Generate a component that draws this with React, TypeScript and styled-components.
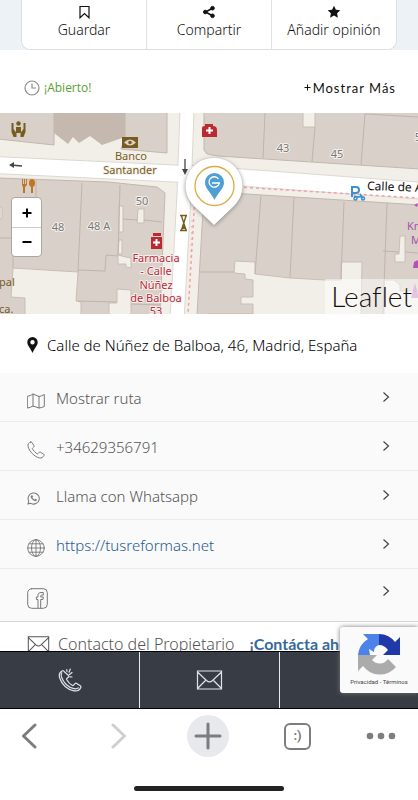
import React from "react";
import styled, { createGlobalStyle, css } from "styled-components";

const sans = '"Noto Sans", "Open Sans", sans-serif';
const rounded = 'Lato, "Open Sans", sans-serif';

const GlobalStyle = createGlobalStyle`
  *, *::before, *::after { box-sizing: border-box; }
  body { margin: 0; background: #fff; font-family: ${sans}; font-weight: 300; color: #111; }
  button { font: inherit; color: inherit; border: 0; padding: 0; background: none; cursor: pointer; }
  a { color: inherit; text-decoration: none; }
  svg { display: block; flex: none; }
`;

const Screen = styled.div`
  position: relative;
  display: flex;
  flex-direction: column;
  height: 100vh;
  overflow: hidden;
`;

const Content = styled.main`
  flex: 1;
  min-height: 0;
  overflow: hidden;
`;

const ActionsBand = styled.div`
  height: 50px;
  padding: 0 21px;
  background: #edf2f6;
`;

const ActionsCard = styled.div`
  display: flex;
  height: 100%;
  background: #fff;
  border: 1px solid #dbdfe3;
  border-top: 0;
  border-radius: 0 0 9px 9px;
`;

const Action = styled.button`
  flex: 1;
  display: flex;
  flex-direction: column;
  align-items: center;
  gap: 2px;
  padding-top: 5px;
  font-size: 14px;
  line-height: 18px;
  white-space: nowrap;
  & + & { border-left: 1px solid #dfe2e6; }
`;

const StatusRow = styled.section`
  display: flex;
  align-items: center;
  justify-content: space-between;
  height: 63px;
  padding: 12px 22px 0 24px;
`;

const OpenState = styled.div`
  display: flex;
  align-items: center;
  gap: 4px;
  color: #5a9e32;
  font-family: "Open Sans", sans-serif;
  font-size: 12px;
  font-weight: 400;
  line-height: 18px;
`;

const MoreButton = styled.button`
  display: flex;
  align-items: center;
  gap: 2px;
  font-family: ${rounded};
  font-size: 13px;
  font-weight: 400;
  line-height: 18px;
  letter-spacing: 1px;
`;

const MapFrame = styled.section`
  position: relative;
  height: 201px;
  overflow: hidden;
  background: #f2efe9;
`;

const MapDrawing = styled.svg`
  width: 100%;
  height: 100%;
  font-family: "Noto Sans", sans-serif;
  font-weight: 400;
`;

const ZoomControl = styled.div`
  position: absolute;
  left: 11px;
  top: 84px;
  width: 31px;
  border: 1px solid #aaa6a2;
  border-radius: 4px;
  background: #fff;
  overflow: hidden;
`;

const ZoomButton = styled.button`
  display: grid;
  place-items: center;
  width: 100%;
  height: 29px;
  color: #000;
  & + & { border-top: 1px solid #ccc; }
`;

const Attribution = styled.a`
  position: absolute;
  right: 0;
  bottom: 0;
  height: 35px;
  padding: 0 6px;
  background: rgba(255, 255, 255, 0.5);
  color: #111;
  font-family: ${rounded};
  font-size: 28px;
  font-weight: 300;
  font-variant-ligatures: none;
  line-height: 35px;
`;

const Address = styled.address`
  display: flex;
  align-items: center;
  gap: 9px;
  height: 59px;
  padding: 2px 27px 0;
  font-style: normal;
  font-size: 15px;
  line-height: 20px;
  white-space: nowrap;
  color: #000;
`;

const Links = styled.nav`
  background: #fafafa;
  border-bottom: 1px solid #d5d5d5;
`;

const LinkRow = styled.a<{ $blue?: boolean; $tall?: boolean }>`
  display: flex;
  align-items: center;
  height: 49px;
  padding: 2px 28px 0 27px;
  font-size: 15px;
  line-height: 20px;
  color: ${(p) => (p.$blue ? "#1f5a90" : "#555")};
  border-bottom: 1px solid #ececec;
  ${(p) => p.$tall && css`height: 52px; border-bottom: 0;`}
`;

const LinkIcon = styled.span`
  width: 29px;
  padding-top: 5px;
  color: #777;
`;

const LinkText = styled.span`
  flex: 1;
`;

const RowArrow = styled.span<{ $raised?: boolean }>`
  color: #444;
  padding-bottom: ${(p) => (p.$raised ? "10px" : "2px")};
`;

const ContactRow = styled.section`
  display: flex;
  align-items: center;
  gap: 8px;
  padding: 11px 27px;
  font-size: 16px;
  line-height: 22px;
  white-space: nowrap;
  color: #555;
`;

const ContactLink = styled.a`
  margin-left: 7px;
  color: #36699a;
  font-family: ${rounded};
  font-weight: 700;
`;

const QuickBar = styled.nav`
  display: grid;
  grid-template-columns: 1fr 1fr 1fr;
  flex: none;
  height: 58px;
  background: #383d45;
  border: solid #000;
  border-width: 1px 0;
`;

const QuickButton = styled.button`
  display: grid;
  place-items: center;
  color: #dfe4e9;
  & + & { border-left: 1px solid #e6ebef; }
`;

const BrowserBar = styled.footer`
  display: flex;
  flex-direction: column;
  align-items: center;
  justify-content: space-between;
  flex: none;
  height: 91px;
  padding: 6px 0 9px;
  background: #fff;
`;

const BrowserButtons = styled.div`
  display: flex;
  align-items: center;
  justify-content: space-between;
  width: 100%;
  padding: 0 22px 0 8px;
`;

const BrowserButton = styled.button<{ $faint?: boolean; $round?: boolean; $narrow?: boolean }>`
  display: grid;
  place-items: center;
  width: ${(p) => (p.$narrow ? "30px" : "42px")};
  height: 42px;
  border-radius: ${(p) => (p.$round ? "50%" : "0")};
  color: ${(p) => (p.$faint ? "#cfcfd0" : "#7b7d80")};
  background: ${(p) => (p.$round ? "#e7e9ec" : "transparent")};
`;

const TabCount = styled.span`
  display: grid;
  place-items: center;
  width: 27px;
  height: 27px;
  border: 2px solid #7b7d80;
  border-radius: 6px;
  font-family: Roboto, sans-serif;
  font-size: 13px;
  font-weight: 700;
  line-height: 16px;
`;

const HomeIndicator = styled.div`
  width: 36%;
  height: 5px;
  border-radius: 3px;
  background: #222;
`;

const PrivacyBadge = styled.aside`
  position: absolute;
  right: 0;
  bottom: 107px;
  display: flex;
  flex-direction: column;
  align-items: center;
  width: 78px;
  height: 66px;
  padding-top: 6px;
  border-radius: 3px 0 0 3px;
  background: #fafafa;
  box-shadow: 0 0 5px #777;
  font-family: Roboto, sans-serif;
  font-size: 6px;
  font-weight: 400;
  line-height: 9px;
  color: #444;
`;

const Chevron = () => (
  <svg width="8" height="12" viewBox="0 0 8 12" fill="none" stroke="currentColor" strokeWidth="1.2">
    <path d="M1.500 1.500 6.500 6l-5 4.500" />
  </svg>
);

const Envelope = ({ width, height }: { width: number; height: number }) => (
  <svg width={width} height={height} viewBox="0 0 26 20" fill="none" stroke="currentColor" strokeWidth="1.2">
    <path d="M1 1h24v18H1zM1 2l9 8.500c2 1.800 4 1.800 6 0L25 2M1 18.500l8-8M25 18.500l-8-8" />
  </svg>
);

const thin = { fill: "none", stroke: "currentColor", strokeWidth: 1, strokeLinejoin: "round" as const, strokeLinecap: "round" as const };

const FoldedMap = () => (
  <svg width="18" height="16" viewBox="0 0 18 16" {...thin}>
    <path d="M.7 3.200C2.500 3 4.200 2.200 6 1l6 2.500c1.800-.2 3.500-1 5.300-2v12c-1.800.8-3.500 1.300-5.300 1.500l-6-2c-1.800 1-3.500 1.600-5.300 2zM6 1v12M12 3.500V15" />
  </svg>
);
const Phone = () => (
  <svg width="18" height="18" viewBox="0 0 18 18" {...thin}>
    <path d="M3.600 1C1.500 1.800.5 3.500 1 5.400c1 4.600 6.600 10.600 11.400 11.500 2 .4 3.900-.7 4.600-2.600.2-.6 0-1-.5-1.300l-3-1.800c-.5-.3-1-.2-1.400.2l-1 1.200c-.3.400-.8.400-1.200.1-1.800-1.200-3.200-2.800-4.400-4.600-.3-.5-.2-.9.2-1.200l1-.9c.5-.4.500-.9.2-1.400L5 1.500C4.600 1 4.200.8 3.600 1z" />
  </svg>
);
const Whatsapp = () => (
  <svg width="13" height="13" viewBox="0 0 14 14" {...thin} strokeWidth="1.100">
    <path d="M1 13l.9-3.200A6 6 0 1 1 4.200 12.200z" />
    <path d="M4.800 3.700c-1 .8-.8 2 .2 3.400 1.200 1.700 2.700 2.600 4 2.600 1 0 1.600-.6 1.500-1.500L8.900 7.500l-.8.900C7 8 6.100 7.100 5.700 6l.7-.8-.6-1.500z" fill="currentColor" strokeWidth=".3" />
  </svg>
);
const Globe = () => (
  <svg width="18" height="18" viewBox="0 0 18 18" {...thin} strokeWidth=".9">
    <circle cx="9" cy="9" r="8.300" />
    <ellipse cx="9" cy="9" rx="4.500" ry="8.300" />
    <path d="M9 .7v16.600M.7 9h16.600M2 4.800h14M2 13.200h14" />
  </svg>
);
const Facebook = () => (
  <svg width="21" height="21" viewBox="0 0 21 21" {...thin}>
    <rect x=".7" y=".7" width="19.600" height="19.600" rx="4" />
    <path d="M11 20v-8.500H9.400V9H11V7.500c0-2 1.200-3 3-3h2.300v2.600h-1.600c-.7 0-1 .3-1 1V9h2.600l-.4 2.500h-2.200V20" />
  </svg>
);
const RingingPhone = () => (
  <svg width="24" height="24" viewBox="0 0 24 24" {...thin} strokeWidth="1.200">
    <path d="M4 3C1.400 4.500.7 7 1.700 10c2 6.500 7.800 12 14.300 12.800 3 .4 5.700-.9 6.800-3.400.3-.7.100-1.200-.5-1.600l-3.600-2.300c-.6-.4-1.200-.3-1.700.2l-1.400 1.500c-.4.500-1 .5-1.500.1-2.200-1.300-4-3.300-5.300-5.600-.3-.6-.2-1.100.3-1.500l1.200-1c.6-.5.600-1.100.3-1.700L6.300 3.800C5.800 2.700 5 2.400 4 3zM3.800 5c-.8 1-.8 2.200-.3 4 1.700 5.500 6.700 10.500 12.500 11.700 1.600.3 3.200.1 4.300-.8M9 3.500l-.3-2M11 4.300l1.300-3.300M11.500 6.500l2.500-2M12 8.800l2 .2" />
  </svg>
);

const actions = [
  {
    label: "Guardar",
    icon: <svg width="15" height="14" viewBox="0 0 15 14" fill="none" stroke="currentColor" strokeWidth="1.200"><path d="M3 1.500h9v11.300L7.500 8.600 3 12.800z" /></svg>,
  },
  {
    label: "Compartir",
    icon: <svg width="14" height="14" viewBox="0 0 14 14" fill="currentColor" stroke="currentColor"><path d="M10 3.500 3.500 7l6.500 3.500" fill="none" strokeWidth="1.500" /><circle cx="10.500" cy="3.200" r="1.800" /><circle cx="3.300" cy="7" r="1.800" /><circle cx="10.500" cy="10.800" r="1.800" /></svg>,
  },
  {
    label: "Añadir opinión",
    icon: <svg width="14" height="14" viewBox="0 0 14 14" fill="currentColor"><path d="m7 .8 1.900 4 4.400.5-3.200 3 .8 4.400L7 10.600l-3.900 2.100.8-4.400-3.200-3 4.400-.5z" /></svg>,
  },
];

const links = [
  { label: "Mostrar ruta", icon: <FoldedMap />, href: "#ruta" },
  { label: "+34629356791", icon: <Phone />, href: "tel:+34629356791" },
  { label: "Llama con Whatsapp", icon: <Whatsapp />, href: "#whatsapp" },
  { label: "https://tusreformas.net", icon: <Globe />, href: "https://tusreformas.net", blue: true },
  { label: "", icon: <Facebook />, href: "#facebook", tall: true },
];

const StreetMap = () => (
  <MapDrawing viewBox="0 113 418 201" preserveAspectRatio="xMidYMid slice" role="img" aria-label="Mapa">
    <rect y="113" width="418" height="201" fill="#f2efe9" />
    <g fill="#d9d0c9" stroke="#c3b7ae" strokeWidth="1">
      <path d="M-2 112H54v33L-2 139z" />
      <path d="M125 112h42v41l-46-4 4-12z" />
      <path d="M204 112H420v57l-202-13-11-2-3-4z" />
      <path d="M-2 178l110 4 49 5 8 6-5 122H-2z" />
      <path d="M204 192l27 1 189 12v110H197z" />
    </g>
    <path d="M54 112h71v25l-23 8-12-9-11 7-6-6-5 7-14-11z" fill="#c5b9af" />
    <g fill="#f2efe9" stroke="#c9beb5" strokeWidth="1">
      <path d="M303 112h12v15h-12z" />
      <path d="M13 268l65 4-2 29 5 1v13H25v-17l-14-1z" />
      <path d="M117 289l14 1v25h-22v-12h8z" />
      <path d="M118 255l8 2 5 1v10l-5-1v-3h-8z" />
      <path d="M119 206h4v26h-4zM119 240h3v14h-4zM138 209h6v14h-7z" />
      <path d="M235 261l20 1v12l35 4 35 2h16v-18h21l-1 53H253v-11h-12v-7h12v-17l-8-1v-5l-11-1z" />
      <path d="M400 236h5v26h-10v-8h4z" />
      <path d="M384 280h10l6 5v6h20v24h-36z" />
      <path d="M0 207h2v12H0z" />
    </g>
    <g fill="none" stroke="#c0b4ab" strokeWidth="1">
      <path d="M265 113l-2 45M315 127l-3 35M365 114l-4 51M365 114l53 3" />
      <path d="M36 180v20M82 183l-4 89M120 185l-2 70M78 270l27 1 1-16 12 1M0 238h12M123 219l15 1M144 220l18 2M13 256v12M131 304l29 1M78 301l38 1" />
      <path d="M261 195l-6 79M294 197l-4 81M344 202l-3 78M387 203l-4 112M208 272h26M200 272h8M208 314h45M383 251l16 1M405 252l13 1" />
    </g>
    <path d="M-5 165l190 9h10l230 17" fill="none" stroke="#ddd8d2" strokeWidth="18" />
    <path d="M187 110l-3 85-7 125" fill="none" stroke="#ddd8d2" strokeWidth="15" />
    <path d="M-5 165l190 9h10l230 17" fill="none" stroke="#fff" strokeWidth="16" />
    <path d="M187 110l-3 85-7 125" fill="none" stroke="#fff" strokeWidth="13" />
    <path d="M238 187l180 11M195 195l-7 120" fill="none" stroke="#f0a3a3" strokeWidth="1.500" strokeDasharray="3 3" />
    <path d="M192 220l-2 50" fill="none" stroke="#f3bcbc" strokeWidth="1" strokeDasharray="2 4" />

    <g fill="none" stroke="#444" strokeWidth="1.300">
      <path d="M22 166l-11-1" /><path d="M185 159v13" />
    </g>
    <path d="M9 165l5-3v6zM185 175l-3-6h6z" fill="#444" />

    <g fill="#775c20">
      <circle cx="18.500" cy="123.500" r="2.200" />
      <path d="M16 127h5v6h-5zM11.500 123h2v6l3 4v4h-3l-2-5zM25.500 123h-2v6l-3 4v4h3l2-5z" />
      <path fillRule="evenodd" d="M122 137h16v11h-16zM124 142.500q6 6 12 0-6-6-12 0z" />
      <circle cx="130" cy="142.500" r="1.800" />
    </g>
    <path fill="none" stroke="#775c20" strokeWidth="1.400" d="M180 215.500h7M180 230.500h7M181.500 216l4.500 14M186 216l-4.500 14" />
    <path d="M183.700 223l2 6h-4z" fill="#775c20" />
    <g fill="#c07627">
      <path d="M22 179h1v5h1v-5h1v5h1v-5h1v6l-2 2v6h-2v-6l-1-2z" />
      <ellipse cx="32" cy="183" rx="3" ry="4" /><path d="M31 186h2v7h-2z" />
    </g>
    <path d="M202 128q0-2 3-2v-2h8v2q4 0 4 4v7h-15z" fill="#b92b30" />
    <path d="M209.500 127v7M206 130.500h7" stroke="#fff" strokeWidth="2" />
    <path d="M153 233h8v3h-8zM151 237h11v12h-11z" fill="#b92b30" />
    <path d="M156.500 239v7M153 242.500h7" stroke="#fff" strokeWidth="2" />
    <g fill="none" stroke="#3f8fd0">
      <path d="M352 197v-10h4a2.500 2.500 0 0 1 0 6h-4" strokeWidth="2" />
      <circle cx="355.500" cy="198.500" r="1.500" strokeWidth="1.500" /><circle cx="363" cy="198.500" r="1.500" strokeWidth="1.500" />
      <path d="M354 196l4 1 4-1M360 194l3 4" strokeWidth="1.800" />
    </g>
    <g fill="#b353b8">
      <path d="M418 203l-4 2 3 2z" /><path d="M414 262l4-2v8h-5z" />
      <path d="M415 283l3 11v4h-7z" opacity=".65" />
    </g>

    <g textAnchor="middle" stroke="#f5f1ec" strokeWidth="2" paintOrder="stroke" strokeLinejoin="round">
      <g fill="#775c20" fontSize="11">
        <text x="131" y="160">Banco</text><text x="130" y="174">Santander</text>
      </g>
      <g fill="#777" fontSize="11">
        <text x="283" y="152">43</text><text x="337" y="158">45</text><text x="142" y="205">50</text>
        <text x="58" y="231">48</text><text x="99" y="230">48 A</text><text x="421" y="141">51</text>
      </g>
      <g fill="#b92b42" fontSize="11">
        <text x="156" y="262">Farmacia</text><text x="156" y="275">- Calle</text><text x="156" y="289">Núñez</text>
        <text x="156" y="302">de Balboa</text><text x="156" y="315">53</text>
      </g>
    </g>
    <g fill="#775c20" fontSize="11"><text x="-1" y="286">pal</text><text x="-1" y="313">ca.</text></g>
    <g fill="#a553a8" fontSize="11"><text x="407" y="230">Kr</text><text x="411" y="244">M</text></g>
    <text x="367" y="190" fontSize="12" fill="#111" transform="rotate(2 367 190)">Calle de Ay</text>

    <g filter="drop-shadow(0 1px 2px #888)">
      <path d="M214 158a28 28 0 0 1 20 48l-20 19-20-19a28 28 0 0 1 20-48z" fill="#fff" />
    </g>
    <circle cx="214.500" cy="186" r="19.500" fill="none" stroke="#d9ad48" strokeWidth="1.300" />
    <path d="M214.500 173a9.500 9.500 0 0 1 9.500 9.500c0 6-6 10-9.500 17.500-3.500-7.500-9.500-11.500-9.500-17.500a9.500 9.500 0 0 1 9.500-9.500z" fill="#4f9fd4" />
    <path d="M218.500 179a5.200 5.200 0 1 0 .8 4h-5M212 183h7" fill="none" stroke="#fff" strokeWidth="1.300" />
  </MapDrawing>
);

export default function App() {
  return (
    <Screen>
      <GlobalStyle />
      <Content>
        <ActionsBand>
          <ActionsCard>
            {actions.map((a) => (
              <Action key={a.label}>{a.icon}{a.label}</Action>
            ))}
          </ActionsCard>
        </ActionsBand>
        <StatusRow>
          <OpenState>
            <svg width="16" height="16" viewBox="0 0 16 16" fill="none" stroke="#8d8d8d" strokeWidth="1.200">
              <circle cx="8" cy="8" r="7" /><path d="M8 3.500V8h4" />
            </svg>
            ¡Abierto!
          </OpenState>
          <MoreButton>
            <svg width="7" height="7" viewBox="0 0 7 7" stroke="currentColor"><path d="M3.500.5v6M.5 3.500h6" /></svg>
            Mostrar Más
          </MoreButton>
        </StatusRow>
        <MapFrame>
          <StreetMap />
          <ZoomControl>
            <ZoomButton aria-label="Acercar">
              <svg width="10" height="10" viewBox="0 0 10 10" stroke="currentColor" strokeWidth="2"><path d="M5 .5v9M.5 5h9" /></svg>
            </ZoomButton>
            <ZoomButton aria-label="Alejar">
              <svg width="10" height="10" viewBox="0 0 10 10" stroke="currentColor" strokeWidth="2"><path d="M.5 5h9" /></svg>
            </ZoomButton>
          </ZoomControl>
          <Attribution href="#leaflet">Leaflet</Attribution>
        </MapFrame>
        <Address>
          <svg width="11" height="16" viewBox="0 0 11 16" fill="#111">
            <path fillRule="evenodd" d="M5.500 0A5.200 5.200 0 0 1 10.700 5.200C10.700 8.500 7.500 11 5.500 16 3.500 11 .3 8.500.3 5.200A5.200 5.200 0 0 1 5.500 0zm0 3a2.200 2.200 0 1 0 0 4.400 2.200 2.200 0 0 0 0-4.400z" />
          </svg>
          Calle de Núñez de Balboa, 46, Madrid, España
        </Address>
        <Links>
          {links.map((l) => (
            <LinkRow key={l.href} href={l.href} $blue={l.blue} $tall={l.tall} aria-label={l.label || "Facebook"}>
              <LinkIcon>{l.icon}</LinkIcon>
              <LinkText>{l.label}</LinkText>
              <RowArrow $raised={l.tall}><Chevron /></RowArrow>
            </LinkRow>
          ))}
        </Links>
        <ContactRow>
          <Envelope width={23} height={17} />
          Contacto del Propietario
          <ContactLink href="#contacto">¡Contácta ahora!</ContactLink>
        </ContactRow>
      </Content>
      <QuickBar>
        <QuickButton aria-label="Llamar"><RingingPhone /></QuickButton>
        <QuickButton aria-label="Correo"><Envelope width={27} height={20} /></QuickButton>
        <QuickButton aria-label="Más" />
      </QuickBar>
      <BrowserBar>
        <BrowserButtons>
          <BrowserButton aria-label="Atrás">
            <svg width="16" height="28" viewBox="0 0 16 28" {...thin} strokeWidth="3"><path d="M14 3 2.500 14 14 25" /></svg>
          </BrowserButton>
          <BrowserButton aria-label="Adelante" $faint>
            <svg width="16" height="28" viewBox="0 0 16 28" {...thin} strokeWidth="3"><path d="M2 3 13.500 14 2 25" /></svg>
          </BrowserButton>
          <BrowserButton aria-label="Nueva pestaña" $round>
            <svg width="28" height="28" viewBox="0 0 28 28" {...thin} strokeWidth="3"><path d="M14 2v24M2 14h24" /></svg>
          </BrowserButton>
          <BrowserButton aria-label="Pestañas"><TabCount>:)</TabCount></BrowserButton>
          <BrowserButton aria-label="Menú" $narrow>
            <svg width="30" height="8" viewBox="0 0 30 8" fill="currentColor"><circle cx="4" cy="4" r="3.300" /><circle cx="15" cy="4" r="3.300" /><circle cx="26" cy="4" r="3.300" /></svg>
          </BrowserButton>
        </BrowserButtons>
        <HomeIndicator />
      </BrowserBar>
      <PrivacyBadge>
        <svg width="44" height="44" viewBox="0 0 44 44">
          <path d="M22 1H6l5 5A21 21 0 0 0 1 22h12l-1-6 5 3c0-4 2-6 5-7z" fill="#4d82e8" />
          <path d="M22 1a21 21 0 0 1 16 8l5-5v18H26l5-5c-2-3-5-5-9-5z" fill="#2039a8" />
          <path d="M1 22v16l5-5a21 21 0 0 0 33 1l-8-8a10 10 0 0 1-16 1l5-5z" fill="#ababab" />
        </svg>
        Privacidad - Términos
      </PrivacyBadge>
    </Screen>
  );
}
